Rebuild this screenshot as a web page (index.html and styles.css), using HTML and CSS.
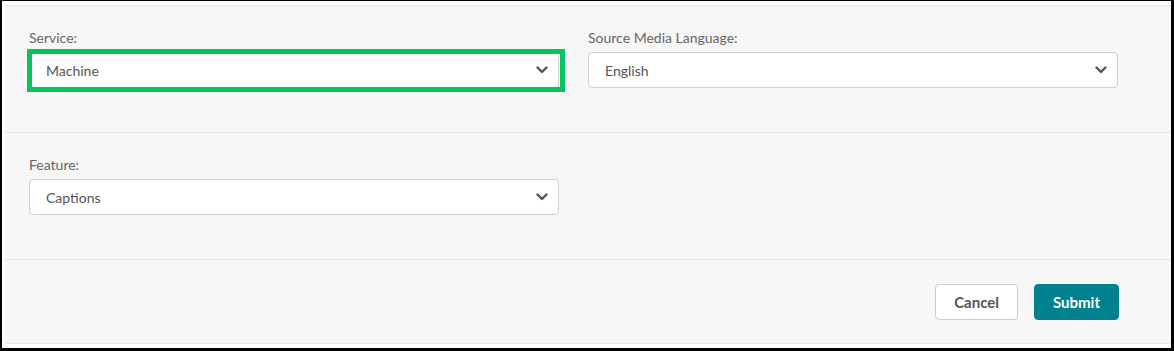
FILE: index.html
```html
<!DOCTYPE html>
<html lang="en">
<head>
    <meta charset="UTF-8">
    <title>Order Request</title>
    <link rel="stylesheet" href="styles.css">
</head>
<body>
    <div class="frame">
        <form class="panel" onsubmit="event.preventDefault();">
            <div class="section columns">
                <div class="field">
                    <label class="field-label" for="service">Service:</label>
                    <div class="select-wrap highlighted">
                        <select id="service" class="select">
                            <option>Machine</option>
                            <option>Professional</option>
                        </select>
                        <svg class="chevron" width="12" height="8" viewBox="0 0 12 8"><path d="M1.5 1.5 L6 6 L10.5 1.5" fill="none" stroke="#555" stroke-width="2.4" stroke-linecap="round" stroke-linejoin="round"/></svg>
                    </div>
                </div>
                <div class="field">
                    <label class="field-label" for="language">Source Media Language:</label>
                    <div class="select-wrap">
                        <select id="language" class="select">
                            <option>English</option>
                            <option>Spanish</option>
                        </select>
                        <svg class="chevron" width="12" height="8" viewBox="0 0 12 8"><path d="M1.5 1.5 L6 6 L10.5 1.5" fill="none" stroke="#555" stroke-width="2.4" stroke-linecap="round" stroke-linejoin="round"/></svg>
                    </div>
                </div>
            </div>

            <div class="section columns">
                <div class="field">
                    <label class="field-label" for="feature">Feature:</label>
                    <div class="select-wrap">
                        <select id="feature" class="select">
                            <option>Captions</option>
                            <option>Transcript</option>
                        </select>
                        <svg class="chevron" width="12" height="8" viewBox="0 0 12 8"><path d="M1.5 1.5 L6 6 L10.5 1.5" fill="none" stroke="#555" stroke-width="2.4" stroke-linecap="round" stroke-linejoin="round"/></svg>
                    </div>
                </div>
            </div>

            <div class="footer">
                <button type="button" class="btn btn-cancel">Cancel</button>
                <button type="submit" class="btn btn-submit">Submit</button>
            </div>
        </form>
    </div>
</body>
</html>
```

FILE: styles.css
```css
body {
    margin: 0;
    background: #fff;
    font-family: Lato, "Open Sans", Arial, sans-serif;
}

.frame {
    width: 1174px;
    height: 351px;
    box-sizing: border-box;
    border-style: solid;
    border-color: #000;
    border-width: 1px 3px 3px 2px;
    padding: 4px 0 4px 3px;
}

.panel {
    height: 100%;
    box-sizing: border-box;
    margin: 0;
    background: #f7f7f7;
    border-top: 1px solid #e6e6e6;
    border-bottom: 1px solid #e6e6e6;
    display: flex;
    flex-direction: column;
}

.section {
    height: 127px;
    box-sizing: border-box;
    padding: 23px 52px 0 24px;
    border-bottom: 1px solid #e4e4e4;
}

.columns {
    display: grid;
    grid-template-columns: 530px 530px;
    column-gap: 29px;
    align-content: start;
}

.field-label {
    display: block;
    font-size: 14px;
    line-height: 17px;
    color: #666;
    margin-bottom: 6px;
}

.select-wrap {
    position: relative;
    height: 36px;
}

.select {
    width: 100%;
    height: 36px;
    box-sizing: border-box;
    appearance: none;
    -webkit-appearance: none;
    background: #fff;
    border: 1px solid #cfcfcf;
    border-radius: 4px;
    padding: 0 40px 0 16px;
    font-family: inherit;
    font-size: 14px;
    color: #555;
    outline: none;
}

.chevron {
    position: absolute;
    right: 11px;
    top: 14px;
    pointer-events: none;
}

.highlighted::after {
    content: "";
    position: absolute;
    left: -2px;
    top: -3px;
    right: -6px;
    bottom: -4px;
    border: 5px solid #04c45f;
    pointer-events: none;
}

.footer {
    flex: 1;
    display: flex;
    justify-content: flex-end;
    align-items: flex-start;
    gap: 16px;
    padding: 24px 52px 0 0;
}

.btn {
    height: 36px;
    box-sizing: border-box;
    padding: 0 18px;
    border-radius: 4px;
    font-family: inherit;
    font-size: 15px;
    font-weight: bold;
    cursor: pointer;
}

.btn-cancel {
    background: #fff;
    color: #555;
    border: 1px solid #cccccc;
}

.btn-submit {
    background: #00818f;
    color: #fff;
    border: 1px solid #00818f;
}

.btn-submit:hover {
    background: #006b77;
}
```
